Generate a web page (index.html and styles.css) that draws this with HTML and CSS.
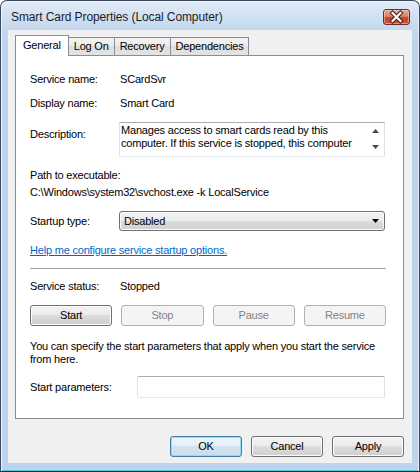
FILE: index.html
```html
<!DOCTYPE html>
<html>
<head>
<meta charset="utf-8">
<link rel="stylesheet" href="styles.css">
</head>
<body>
<div class="window">
  <div class="titlebar">
    <span class="title">Smart Card Properties (Local Computer)</span>
    <div class="close">
      <svg width="27" height="16" viewBox="0 0 27 16">
        <path d="M9.5 4 L17.5 12 M17.5 4 L9.5 12" stroke="#4a1a12" stroke-width="4.2" stroke-linecap="square" fill="none"/>
        <path d="M9.5 4 L17.5 12 M17.5 4 L9.5 12" stroke="#ffffff" stroke-width="2.2" stroke-linecap="square" fill="none"/>
      </svg>
    </div>
  </div>
  <div class="client">
    <div class="tabs">
      <div class="tab active">General</div>
      <div class="tab">Log On</div>
      <div class="tab">Recovery</div>
      <div class="tab">Dependencies</div>
    </div>
    <div class="panel">
      <div class="row first"><span class="label">Service name:</span><span>SCardSvr</span></div>
      <div class="row gap11"><span class="label">Display name:</span><span>Smart Card</span></div>
      <div class="row desc-row">
        <span class="label desc-label">Description:</span>
        <div class="desc-box">
          <div class="desc-text">Manages access to smart cards read by this computer. If this service is stopped, this computer</div>
          <div class="desc-scroll">
            <span class="arrow"><svg width="7" height="4" viewBox="0 0 7 4"><path d="M3.5 0 L7 4 L0 4 Z" fill="#4a4a4a"/></svg></span>
            <span class="arrow"><svg width="7" height="4" viewBox="0 0 7 4"><path d="M0 0 L7 0 L3.5 4 Z" fill="#4a4a4a"/></svg></span>
          </div>
        </div>
      </div>
      <div class="line path-label">Path to executable:</div>
      <div class="line path-value">C:\Windows\system32\svchost.exe -k LocalService</div>
      <div class="row startup-row">
        <span class="label">Startup type:</span>
        <div class="select">
          <span class="select-text">Disabled</span>
          <svg width="7" height="4" viewBox="0 0 7 4"><path d="M0 0 L7 0 L3.5 4 Z" fill="#000"/></svg>
        </div>
      </div>
      <div class="line link-line"><a class="link" href="#">Help me configure service startup options.</a></div>
      <div class="separator"></div>
      <div class="row status-row"><span class="label">Service status:</span><span>Stopped</span></div>
      <div class="service-buttons">
        <button class="btn">Start</button>
        <button class="btn" disabled>Stop</button>
        <button class="btn" disabled>Pause</button>
        <button class="btn" disabled>Resume</button>
      </div>
      <p class="para">You can specify the start parameters that apply when you start the service from here.</p>
      <div class="row params-row">
        <span class="label params-label">Start parameters:</span>
        <div class="input"></div>
      </div>
    </div>
    <div class="dialog-buttons">
      <button class="btn dbtn default">OK</button>
      <button class="btn dbtn">Cancel</button>
      <button class="btn dbtn">Apply</button>
    </div>
  </div>
</div>
</body>
</html>
```

FILE: styles.css
```css
* { box-sizing: border-box; }
html, body { margin: 0; padding: 0; }
body {
  width: 420px;
  height: 472px;
  font-family: "Liberation Sans", Arial, sans-serif;
  font-size: 11px;
  letter-spacing: -0.2px;
  color: #000;
  background: #ffffff;
}
.window {
  width: 420px;
  height: 472px;
  border: 1px solid #3b4b5d;
  border-bottom-color: #1d2a36;
  border-radius: 7px 7px 0 0;
  background: linear-gradient(to bottom, #e2ecf7 0px, #c9dcf0 22px, #bcd4ed 40px, #bcd4ed 100%);
  box-shadow: inset 1px 1px 0 #eef4fb, inset -1px 0 0 #e3ecf6, inset 0 -1px 0 #5fc8e4;
  padding: 0 7px 7px;
  display: flex;
  flex-direction: column;
}
.titlebar {
  height: 29px;
  display: flex;
  align-items: flex-start;
  justify-content: space-between;
  padding: 0 2px 0 3px;
}
.title {
  margin-top: 9px;
  font-size: 12px;
  line-height: 15px;
  letter-spacing: -0.1px;
  color: #1e1e1e;
}
.close {
  margin-top: 8px;
  width: 27px;
  height: 16px;
  border: 1px solid #6f2b20;
  border-radius: 3px;
  background: linear-gradient(to bottom, #e9a99b 0%, #d9806c 45%, #c2432b 55%, #c8563c 100%);
  box-shadow: inset 0 0 0 1px rgba(255, 220, 210, 0.45);
  display: flex;
  align-items: center;
  justify-content: center;
}
.close svg { display: block; margin: -1px; }
.client {
  height: 433px;
  background: #f0f0f0;
  padding: 5px 8px 6px 7px;
  display: flex;
  flex-direction: column;
}
.tabs {
  height: 21px;
  display: flex;
  align-items: flex-end;
  position: relative;
  z-index: 1;
}
.tab {
  height: 18px;
  margin-bottom: 1px;
  padding: 0 5px;
  border: 1px solid #898c95;
  border-bottom: none;
  border-left: none;
  background: linear-gradient(to bottom, #f3f3f3 0%, #ebebeb 50%, #dedede 50%, #e3e3e3 100%);
  line-height: 17px;
  text-align: center;
  white-space: nowrap;
}
.tab.active {
  height: 21px;
  margin-bottom: 0;
  padding: 0 7px;
  border-left: 1px solid #898c95;
  background: #ffffff;
  line-height: 19px;
}
.panel {
  margin-top: -1px;
  height: 364px;
  border: 1px solid #898c95;
  background: #ffffff;
  padding: 17px 17px 0 14px;
  display: flex;
  flex-direction: column;
}
.row {
  display: flex;
  align-items: center;
  line-height: 13px;
}
.line { line-height: 13px; white-space: nowrap; }
.label { width: 90px; flex: none; }
.first { margin-top: 0; }
.gap11 { margin-top: 11px; }
.desc-row { margin-top: 12px; align-items: flex-start; }
.desc-label { margin-top: 6px; width: 89px; }
.desc-box {
  width: 266px;
  height: 35px;
  border: 1px solid #abadb3;
  border-left-color: #e2e3ea;
  border-right-color: #dbdfe6;
  border-bottom-color: #e3e9ef;
  background: #ffffff;
  display: flex;
}
.desc-text {
  flex: 1;
  height: 28px;
  padding: 1px 2px 0 1px;
  line-height: 13px;
}
.desc-scroll {
  width: 17px;
  display: flex;
  flex-direction: column;
}
.arrow {
  height: 16px;
  display: flex;
  align-items: center;
  justify-content: center;
}
.arrow svg { display: block; }
.path-label { margin-top: 12px; }
.path-value { margin-top: 4px; }
.startup-row { margin-top: 12px; }
.startup-row .label { width: 89px; }
.select {
  width: 266px;
  height: 20px;
  border: 1px solid #707070;
  border-radius: 3px;
  background: linear-gradient(to bottom, #f2f2f2 0%, #ebebeb 50%, #dddddd 50%, #cfcfcf 100%);
  box-shadow: inset 0 0 0 1px #fbfbfb;
  display: flex;
  align-items: center;
  justify-content: space-between;
  padding: 0 5px 0 4px;
}
.select-text { line-height: 13px; }
.select svg { display: block; }
.link-line { margin-top: 13px; }
.link { color: #0066cc; text-decoration: underline; }
.separator {
  margin-top: 11px;
  height: 2px;
  border-top: 1px solid #a0a0a0;
  border-bottom: 1px solid #ffffff;
}
.status-row { margin-top: 10px; }
.service-buttons {
  margin-top: 12px;
  display: flex;
  gap: 9px;
}
.service-buttons .btn { flex: 1; }
.btn {
  height: 21px;
  border: 1px solid #707070;
  border-radius: 3px;
  background: linear-gradient(to bottom, #f2f2f2 0%, #ebebeb 50%, #dddddd 50%, #cfcfcf 100%);
  box-shadow: inset 0 0 0 1px #fcfcfc;
  font-family: inherit;
  font-size: 11px;
  letter-spacing: -0.2px;
  color: #000;
  padding: 0;
  line-height: 13px;
}
.btn:disabled {
  border-color: #adb2b5;
  background: #f4f4f4;
  box-shadow: none;
  color: #838383;
}
.para {
  margin: 14px 0 0;
  line-height: 13px;
}
.params-row { margin-top: 10px; }
.params-label { width: 107px; }
.input {
  width: 248px;
  height: 22px;
  border: 1px solid #abadb3;
  border-left-color: #e2e3ea;
  border-right-color: #dbdfe6;
  border-bottom-color: #e3e9ef;
  border-radius: 2px;
  background: #ffffff;
}
.dialog-buttons {
  margin-top: 17px;
  display: flex;
  justify-content: flex-end;
  gap: 9px;
}
.dbtn { width: 72px; }
.btn.default {
  border-color: #3c7fb1;
  box-shadow: inset 0 0 0 1px #8fdcf8;
  background: linear-gradient(to bottom, #eef6fb 0%, #e3eef6 50%, #d4e4ef 50%, #ccdde9 100%);
}
```
